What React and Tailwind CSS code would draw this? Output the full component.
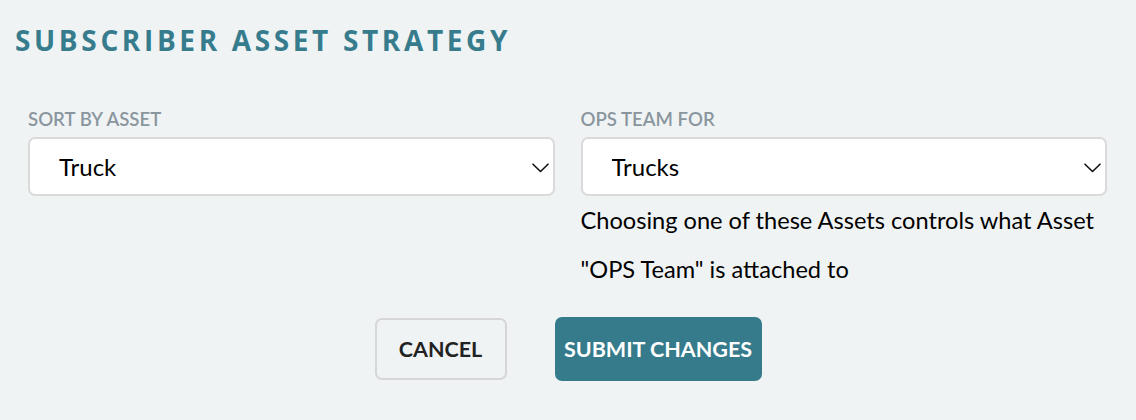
const Chevron = () => (
  <svg
    className="pointer-events-none absolute right-[6px] top-[26px]"
    width="17"
    height="10"
    viewBox="0 0 17 10"
    fill="none"
  >
    <path d="M1 1.2 L8.5 8.5 L16 1.2" stroke="#111" strokeWidth="1.6" strokeLinecap="round" strokeLinejoin="round" />
  </svg>
);

const SelectField = ({ label, value, options }) => (
  <div>
    <label className="block text-[18.6px] font-semibold leading-[22px] uppercase text-[#8a969e]">{label}</label>
    <div className="relative mt-[7px]">
      <select
        defaultValue={value}
        className="block h-[59px] w-full appearance-none rounded-[7px] border-2 border-[#dadada] bg-white pl-[29px] pr-10 text-[24px] text-black outline-none"
        style={{ fontFamily: "Lato, sans-serif" }}
      >
        {options.map((option) => (
          <option key={option}>{option}</option>
        ))}
      </select>
      <Chevron />
    </div>
  </div>
);

export default function App() {
  return (
    <div className="min-h-screen bg-[#f0f3f4] font-['Lato',sans-serif]">
      <h1 className="px-[15px] pt-[26px] font-['Open_Sans',sans-serif] text-[28px] font-bold leading-[28px] tracking-[0.13em] text-[#367c8d]">
        SUBSCRIBER ASSET STRATEGY
      </h1>

      <div className="mt-[54px] grid grid-cols-2 gap-[26px] pl-[28px] pr-[29px]">
        <SelectField label="Sort by Asset" value="Truck" options={["Truck", "Trailer", "Driver"]} />
        <div>
          <SelectField label="OPS Team for" value="Trucks" options={["Trucks", "Trailers", "Drivers"]} />
          <p className="text-[23.6px] leading-[49px] text-black">
            Choosing one of these Assets controls what Asset "OPS Team" is attached to
          </p>
        </div>
      </div>

      <div className="mt-[23px] flex items-center justify-center gap-[48px]">
        <button
          type="button"
          className="h-[62px] w-[132px] rounded-[7px] border-2 border-[#d6d6d6] text-[21.5px] font-bold text-[#222]"
        >
          CANCEL
        </button>
        <button
          type="button"
          className="h-[64px] w-[207px] rounded-[7px] bg-[#357b8b] text-[21.5px] font-bold text-white"
        >
          SUBMIT CHANGES
        </button>
      </div>
    </div>
  );
}
